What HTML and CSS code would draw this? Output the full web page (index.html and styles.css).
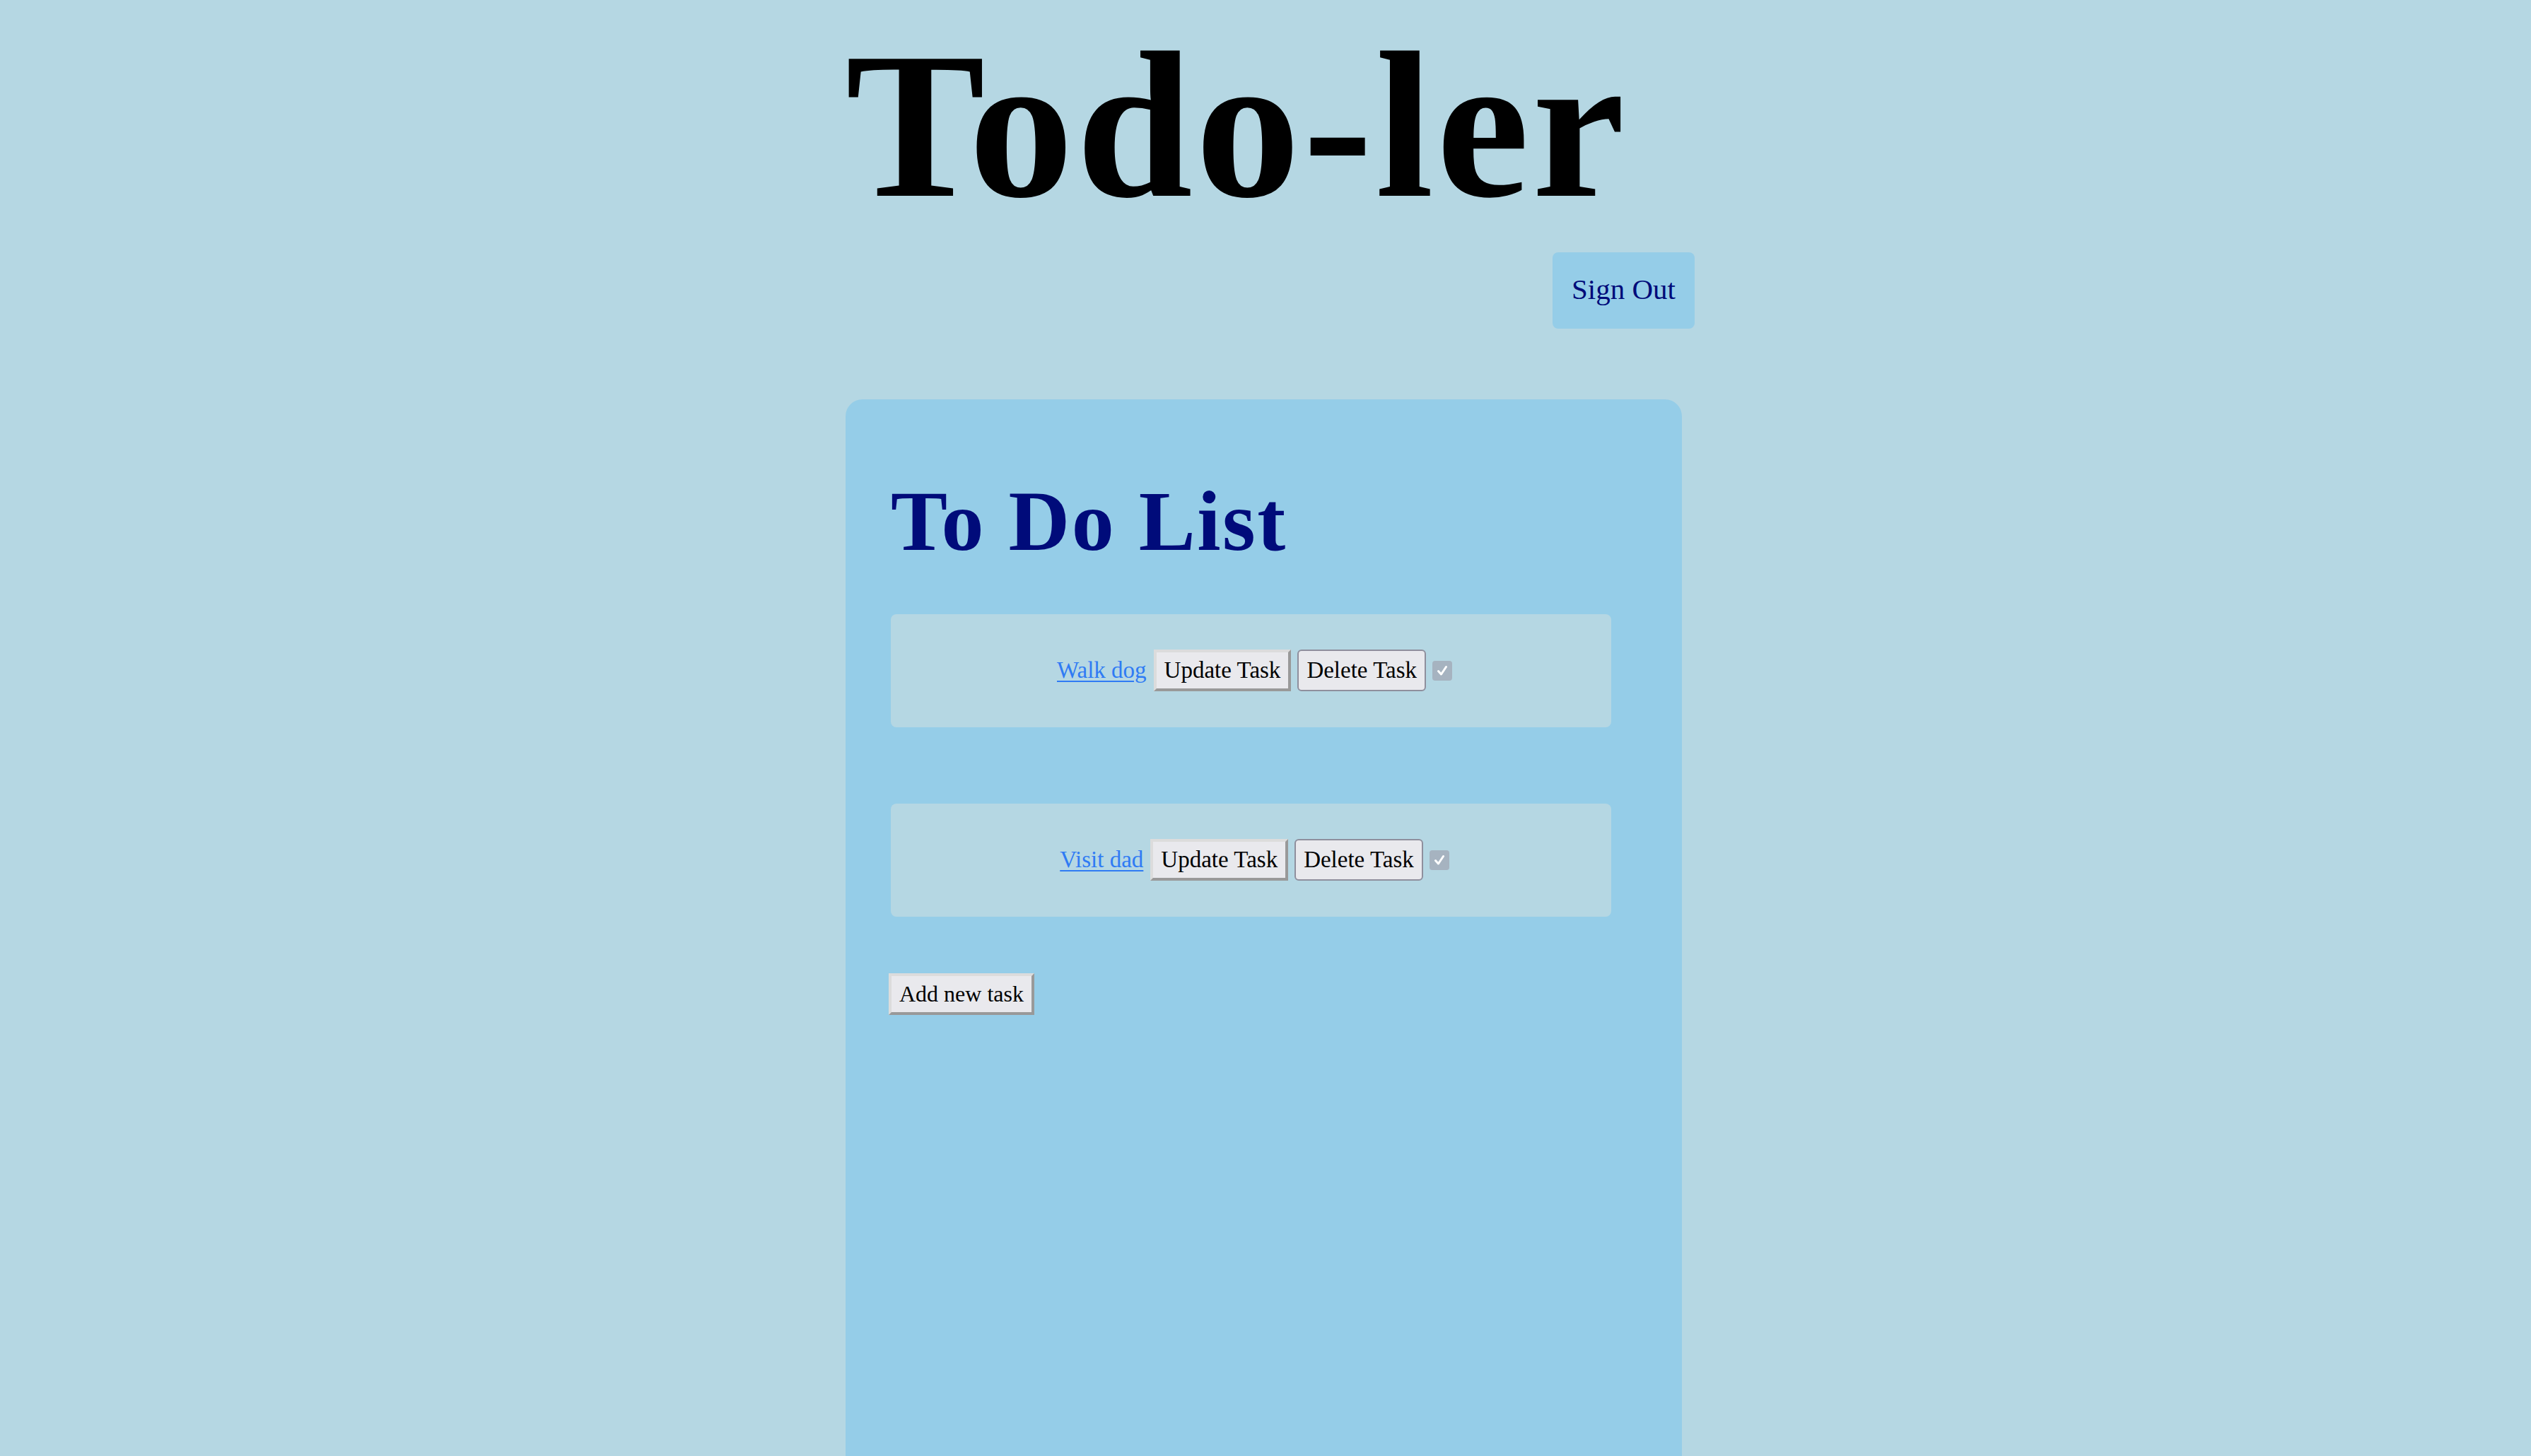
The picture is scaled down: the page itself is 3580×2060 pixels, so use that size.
FILE: index.html
```html
<!DOCTYPE html>
<html lang="en">
<head>
<meta charset="utf-8">
<title>Todo-ler</title>
<link rel="stylesheet" href="styles.css">
</head>
<body>
<div class="page">
  <header class="header">
    <h1 class="site-title">Todo-ler</h1>
    <div class="header-actions">
      <button class="signout-btn" type="button">Sign Out</button>
    </div>
  </header>
  <main class="card">
    <h2 class="card-title">To Do List</h2>
    <ul class="task-list">
      <li class="task-row">
        <a class="task-link" href="#">Walk dog</a>
        <button class="btn btn-outset" type="button">Update Task</button>
        <button class="btn btn-default" type="button">Delete Task</button>
        <span class="check" role="checkbox" aria-checked="true" aria-disabled="true">
          <svg viewBox="0 0 28 28" width="28" height="28" aria-hidden="true"><path d="M8.5 14.5 L12.5 19 L19.5 8.5" fill="none" stroke="#ffffff" stroke-width="3" stroke-linecap="round" stroke-linejoin="round"/></svg>
        </span>
      </li>
      <li class="task-row">
        <a class="task-link" href="#">Visit dad</a>
        <button class="btn btn-outset" type="button">Update Task</button>
        <button class="btn btn-default" type="button">Delete Task</button>
        <span class="check" role="checkbox" aria-checked="true" aria-disabled="true">
          <svg viewBox="0 0 28 28" width="28" height="28" aria-hidden="true"><path d="M8.5 14.5 L12.5 19 L19.5 8.5" fill="none" stroke="#ffffff" stroke-width="3" stroke-linecap="round" stroke-linejoin="round"/></svg>
        </span>
      </li>
    </ul>
    <button class="btn btn-outset add-btn" type="button">Add new task</button>
  </main>
</div>
</body>
</html>
```
FILE: styles.css
```css
html, body {
  margin: 0;
  padding: 0;
}

body {
  background: #b5d7e3;
  font-family: "Liberation Serif", "Times New Roman", serif;
  color: #000;
  height: 2060px;
  overflow: hidden;
}

.page {
  width: 1201px;
  margin-left: calc(50% - 594px);
  padding-top: 14px;
}

.header {
  display: flex;
  flex-direction: column;
}

.site-title {
  margin: 0;
  font-size: 296px;
  font-weight: bold;
  letter-spacing: 4px;
  line-height: 1.107;
  color: #000;
}

.header-actions {
  display: flex;
  justify-content: flex-end;
  margin-top: 15px;
}

.signout-btn {
  font-family: inherit;
  font-size: 41px;
  line-height: 1.107;
  color: #000b7a;
  background: #95cde8;
  border: none;
  border-radius: 8px;
  padding: 30px 27px 33px;
  cursor: pointer;
}

.card {
  width: 1183px;
  box-sizing: border-box;
  min-height: 1600px;
  margin-top: 100px;
  background: #95cde8;
  border-radius: 24px 24px 0 0;
  padding: 107px 100px 0 64px;
}

.card-title {
  margin: 0;
  font-size: 120px;
  font-weight: bold;
  letter-spacing: 2.5px;
  line-height: 1.107;
  color: #000b7a;
}

.task-list {
  list-style: none;
  margin: 64px 0 0;
  padding: 0;
  display: flex;
  flex-direction: column;
  gap: 108px;
}

.task-row {
  height: 160px;
  box-sizing: border-box;
  padding-left: 10px;
  background: #b5d7e3;
  border-radius: 8px;
  display: flex;
  align-items: center;
  justify-content: center;
  gap: 9px;
  font-size: 33px;
}

.task-link {
  color: #2f7bf4;
  text-decoration: underline;
  text-decoration-thickness: 2px;
  text-underline-offset: 4px;
  margin-right: 1px;
}

.btn {
  font-family: inherit;
  font-size: 33px;
  line-height: 37px;
  color: #000;
  background: #e9e9ed;
  margin: 0;
  cursor: pointer;
}

.btn-outset {
  border: 4px solid;
  border-color: #dcdcdc #999999 #999999 #dcdcdc;
  border-radius: 0;
  padding: 7px 11px;
}

.btn-default {
  border: 2px solid #8f8f9d;
  border-radius: 6px;
  padding: 9px 11px;
}

.check {
  width: 28px;
  height: 28px;
  background: #a6b3c0;
  border-radius: 4px;
  display: inline-flex;
}

.add-btn {
  font-size: 32px;
  margin-top: 80px;
  margin-left: -3px;
}
```
